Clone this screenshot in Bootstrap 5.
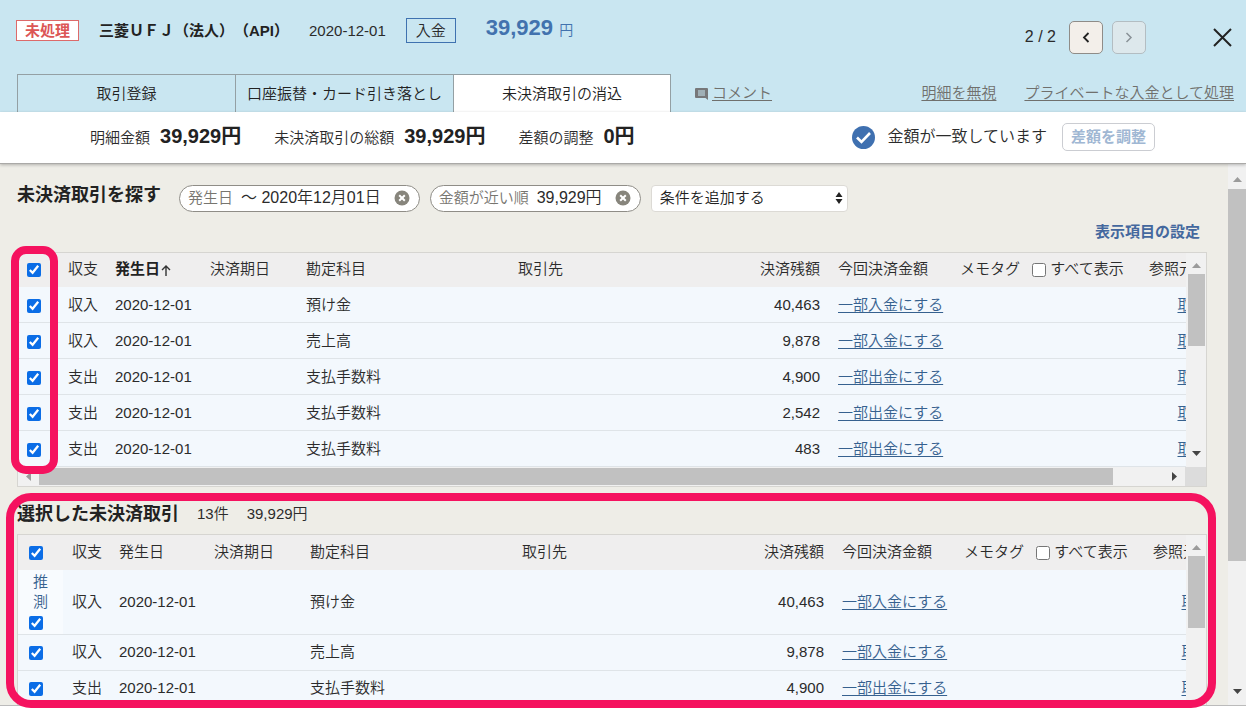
<!DOCTYPE html>
<html lang="ja">
<head>
<meta charset="utf-8">
<meta name="viewport" content="width=device-width, initial-scale=1">
<title>未決済取引の消込</title>
<link href="https://cdn.jsdelivr.net/npm/bootstrap@5.3.0/dist/css/bootstrap.min.css" rel="stylesheet">
<style>
  body { font-family: "Liberation Sans", "Noto Sans CJK JP", sans-serif; font-size: 15px; line-height: 20px; font-weight: 350; color: #2b2b2b; background: #fff; padding-bottom: 6px; text-spacing-trim: space-all; }
  a { color: #36618f; text-decoration: underline; text-underline-offset: 2px; }
  b, h2, strong { color: #222; font-weight: 700; }
  button { font-weight: inherit; }
  input[type=checkbox] { width: 14px; height: 14px; margin: 0; accent-color: #0b6de6; vertical-align: middle; }

  .app-head { background: #c9e6f1; }
  .head-row { height: 74px; padding: 0 14px 0 16px; }
  .head-info { padding-bottom: 13px; gap: 20px; }
  .state-tag { border: 1px solid #dd6a6a; background: #fff; color: #dc5656; font-weight: 700; line-height: 19px; padding: 0 8px; }
  .kind-tag { border: 1px solid #3f72b0; line-height: 23px; padding: 0 9px; }
  .total { color: #4272ae; font-size: 22px; font-weight: 700; padding: 0 0 4px 10px; }
  .total small { font-size: 14px; font-weight: 350; }
  .pager { gap: 9px; font-size: 16px; }
  .pager button { width: 34px; height: 33px; border: 1px solid #8f8c88; border-radius: 5px; background: #f3efea; }
  .pager button:disabled { background: #dde8ec; border-color: #b3bdc2; color: #8a9297; }
  .pager .close-btn { margin-left: 58px; color: #222; }

  .tabs { padding: 0 12px 0 17px; }
  .tab-btn { width: 218px; height: 38px; border: 1px solid #94a0a4; border-width: 1px 0 0 1px; background: transparent; color: #222; padding: 0; }
  .tab-btn.current { background: #fff; border-right-width: 1px; }
  .tabs a { color: #70706d; }
  .tab-links { gap: 28px; }

  .summary { background: #fff; height: 52px; padding: 0 91px 0 90px; border-bottom: 1px solid #aaa9a7; box-shadow: 0 1px 3px rgba(0,0,0,.25); }
  .sums { gap: 33px; }
  .summary b { font-size: 20px; margin-left: 10px; }
  .match { font-size: 16px; gap: 12px; }
  .adjust-btn { font-size: 15px; font-weight: 700; color: #a0b7d3; background: #fff; border: 1px solid #cbcdd2; border-radius: 5px; height: 28px; padding: 0 8px; margin-left: 3px; }

  .work { background: #eeede7; border-bottom: 1px solid #bbb; min-height: 0; }
  .work-body { padding: 21px 21px 0 17px; min-width: 0; min-height: 0; }
  h2 { font-size: 18px; line-height: 20px; margin: 0; }
  .filters { gap: 10px; }
  .filters h2 { margin-right: 8px; padding-bottom: 6px; }
  .pill { height: 27px; background: #fff; border: 1px solid #8f8d87; border-radius: 14px; padding: 0 9px 0 8px; gap: 8px; font-size: 16px; }
  .pill span { color: #77756f; font-size: 15px; }
  .pill button { border: 0; background: none; padding: 0; margin-left: 5px; line-height: 0; }
  .add-cond { position: relative; width: 197px; }
  .add-cond select { appearance: none; width: 100%; height: 27px; border: 1px solid #dcdad5; border-radius: 4px; background: #fff; padding: 0 8px; font-size: 15px; font-weight: 350; color: #222; }
  .add-cond svg { position: absolute; right: 5px; top: 7px; pointer-events: none; }
  .columns-link { height: 40px; padding-right: 7px; }
  .columns-link a { color: #44689e; font-weight: 700; text-decoration: none; }

  .frame { border: 1px solid #d6d5d1; background: #f1f1f1; }
  .grid-view { overflow: hidden; min-width: 0; }
  .deals { table-layout: fixed; width: calc(100% + 59px); margin: 0; color: inherit; white-space: nowrap; }
  .deals.picked { width: calc(100% + 63px); }
  .deals > :not(caption) > * > * { height: 36px; padding: 0 9px; border-bottom: 1px solid #dfe4e8; background: #f3f8fd; vertical-align: middle; font-weight: 350; color: inherit; }
  .deals > thead > tr > th { height: 34px; background: #efeeee; border-bottom-color: #efeeee; }
  .deals > thead > tr > th.sorted { font-weight: 700; color: #222; }
  .deals.picked > :not(caption) > * > :first-child { padding-left: 11px; }
  .deals > tbody > tr > .guess { background: #f8fbfe; height: 65px; white-space: normal; }
  .guess a { display: block; width: 15px; margin-left: 4px; text-decoration: none; }
  .c-in { width: 47px; } .c-day { width: 95px; } .c-due { width: 96px; } .c-acct { width: 212px; }
  .c-rest { width: 100px; } .c-now { width: 122px; } .c-memo { width: 189px; } .c-src { width: 105px; }
  .c-check { width: 41px; } .picked .c-check { width: 45px; }

  .bar-v { width: 20px; padding: 6px 1px 11px 2px; background: #f1f1f1; }
  .bar-v svg, .page-bar svg { flex: none; align-self: center; }
  .thumb { background: #c1c1c1; }
  .bar-v .thumb { height: 72px; margin-top: 6px; }
  .bar-h { height: 19px; }
  .bar-h .thumb { height: 17px; flex: 0 0 92%; }
  .corner { width: 21px; background: #dcdcdc; }
  .page-bar { width: 18px; background: #f1f1f1; padding: 13px 0 11px; }
  .page-bar .thumb { flex: 0 0 72%; margin-top: 7px; }

  .mark-box { position: absolute; border: 8px solid #f5125f; pointer-events: none; }
  .mark-checks { left: -7px; top: -7px; bottom: 12px; width: 47px; border-radius: 15px; }
  .mark-picked { left: -11px; right: -9px; top: 6px; bottom: -3px; border-radius: 25px; }
  .picked-head { padding: 17px 0 10px; gap: 18px; }
  .min-h-0 { min-height: 0; }
</style>
<script src="https://cdn.jsdelivr.net/npm/bootstrap@5.3.0/dist/js/bootstrap.bundle.min.js"></script>
</head>
<body class="vh-100 d-flex flex-column overflow-hidden">
<svg class="d-none">
  <symbol id="clear" viewBox="0 0 16 16"><circle cx="8" cy="8" r="7.5" fill="#87857c"/><path d="M5.2 5.2l5.6 5.6M10.8 5.2l-5.6 5.6" stroke="#fff" stroke-width="2"/></symbol>
  <symbol id="up" viewBox="0 0 9 5"><path d="M0 5L4.500 0 9 5z" fill="#9b9b9b"/></symbol>
  <symbol id="down" viewBox="0 0 9 5"><path d="M0 0L4.500 5 9 0z" fill="#444"/></symbol>
</svg>

<header class="app-head">
  <div class="head-row d-flex align-items-center justify-content-between">
    <div class="head-info d-flex align-items-center text-nowrap">
      <span class="state-tag">未処理</span>
      <strong>三菱ＵＦＪ（法人）（API）</strong>
      <span>2020-12-01</span>
      <span class="kind-tag">入金</span>
      <span class="total">39,929 <small>円</small></span>
    </div>
    <div class="pager d-flex align-items-center">
      <span class="me-1">2 / 2</span>
      <button type="button" aria-label="前へ"><svg width="8" height="11" viewBox="0 0 8 11"><path d="M6.500 1L2 5.500l4.500 4.500" fill="none" stroke="#222" stroke-width="1.800"/></svg></button>
      <button type="button" aria-label="次へ" disabled><svg width="8" height="11" viewBox="0 0 8 11"><path d="M1.500 1L6 5.500 1.500 10" fill="none" stroke="currentColor" stroke-width="1.500"/></svg></button>
      <button type="button" class="close-btn p-0 w-auto border-0 bg-transparent" aria-label="閉じる"><svg width="19" height="19" viewBox="0 0 19 19"><path d="M1 1l17 17M18 1L1 18" stroke="#222" stroke-width="2"/></svg></button>
    </div>
  </div>
  <nav class="tabs d-flex align-items-center text-nowrap">
    <button type="button" class="tab-btn">取引登録</button>
    <button type="button" class="tab-btn">口座振替・カード引き落とし</button>
    <button type="button" class="tab-btn current">未決済取引の消込</button>
    <a href="#" class="ms-4"><svg width="13" height="12" viewBox="0 0 13 12" class="me-1"><path d="M1 0h11a1 1 0 0 1 1 1v11l-2.500-2H1a1 1 0 0 1-1-1V1a1 1 0 0 1 1-1z" fill="#77787a"/><path d="M3 3h7M3 5h7M3 7h7" stroke="#c9e6f1"/></svg>コメント</a>
    <div class="tab-links d-flex ms-auto"><a href="#">明細を無視</a><a href="#">プライベートな入金として処理</a></div>
  </nav>
</header>

<section class="summary d-flex align-items-center justify-content-between position-relative text-nowrap">
  <div class="sums d-flex align-items-baseline">
    <span>明細金額<b>39,929円</b></span>
    <span>未決済取引の総額<b>39,929円</b></span>
    <span>差額の調整<b>0円</b></span>
  </div>
  <div class="match d-flex align-items-center">
    <svg width="23" height="23" viewBox="0 0 23 23"><circle cx="11.500" cy="11.500" r="11.500" fill="#3f70b0"/><path d="M5 11.500l4.500 4.500 8.500-9" fill="none" stroke="#fff" stroke-width="2.600"/></svg>
    <span>金額が一致しています</span>
    <button type="button" class="adjust-btn">差額を調整</button>
  </div>
</section>

<main class="work d-flex flex-fill">
  <div class="work-body d-flex flex-column flex-fill">
    <div class="filters d-flex align-items-center text-nowrap">
      <h2>未決済取引を探す</h2>
      <div class="pill d-flex align-items-center"><span>発生日</span>～ 2020年12月01日<button type="button" aria-label="発生日を解除"><svg width="16" height="16"><use href="#clear"/></svg></button></div>
      <div class="pill d-flex align-items-center"><span>金額が近い順</span>39,929円<button type="button" aria-label="金額を解除"><svg width="16" height="16"><use href="#clear"/></svg></button></div>
      <div class="add-cond">
        <select aria-label="条件を追加する"><option>条件を追加する</option></select>
        <svg width="8" height="12" viewBox="0 0 8 12"><path d="M4 0l3.500 5h-7zM4 12L.5 7h7z" fill="#222"/></svg>
      </div>
    </div>
    <div class="columns-link d-flex align-items-center justify-content-end"><a href="#">表示項目の設定</a></div>

    <div class="frame position-relative">
      <div class="d-flex">
        <div class="grid-view flex-fill">
          <table class="table deals">
            <colgroup><col class="c-check"><col class="c-in"><col class="c-day"><col class="c-due"><col class="c-acct"><col><col class="c-rest"><col class="c-now"><col class="c-memo"><col class="c-src"></colgroup>
            <thead><tr>
              <th><input type="checkbox" checked aria-label="すべて選択"></th><th>収支</th>
              <th class="sorted">発生日<svg width="12" height="12" viewBox="0 0 12 12"><path d="M6 12V2M2 6l4-4 4 4" fill="none" stroke="#333" stroke-width="1.400"/></svg></th>
              <th>決済期日</th><th>勘定科目</th><th>取引先</th><th class="text-end">決済残額</th><th>今回決済金額</th>
              <th>メモタグ <label class="ms-2"><input type="checkbox"> すべて表示</label></th><th>参照元</th>
            </tr></thead>
            <tbody>
              <tr><td><input type="checkbox" checked aria-label="選択"></td><td>収入</td><td>2020-12-01</td><td></td><td>預け金</td><td></td><td class="text-end">40,463</td><td><a href="#">一部入金にする</a></td><td></td><td class="text-center"><a href="#">取引</a></td></tr>
              <tr><td><input type="checkbox" checked aria-label="選択"></td><td>収入</td><td>2020-12-01</td><td></td><td>売上高</td><td></td><td class="text-end">9,878</td><td><a href="#">一部入金にする</a></td><td></td><td class="text-center"><a href="#">取引</a></td></tr>
              <tr><td><input type="checkbox" checked aria-label="選択"></td><td>支出</td><td>2020-12-01</td><td></td><td>支払手数料</td><td></td><td class="text-end">4,900</td><td><a href="#">一部出金にする</a></td><td></td><td class="text-center"><a href="#">取引</a></td></tr>
              <tr><td><input type="checkbox" checked aria-label="選択"></td><td>支出</td><td>2020-12-01</td><td></td><td>支払手数料</td><td></td><td class="text-end">2,542</td><td><a href="#">一部出金にする</a></td><td></td><td class="text-center"><a href="#">取引</a></td></tr>
              <tr><td><input type="checkbox" checked aria-label="選択"></td><td>支出</td><td>2020-12-01</td><td></td><td>支払手数料</td><td></td><td class="text-end">483</td><td><a href="#">一部出金にする</a></td><td></td><td class="text-center"><a href="#">取引</a></td></tr>
            </tbody>
          </table>
        </div>
        <div class="bar-v d-flex flex-column flex-shrink-0"><svg width="9" height="5" class="mt-1"><use href="#up"/></svg><div class="thumb"></div><svg width="9" height="5" class="mt-auto"><use href="#down"/></svg></div>
      </div>
      <div class="bar-h d-flex">
        <div class="d-flex flex-fill align-items-center">
          <svg width="21" height="9" viewBox="0 0 21 9"><path d="M13 0v9L8 4.500z" fill="#9b9b9b"/></svg>
          <div class="thumb"></div>
          <svg class="ms-auto me-2" width="5" height="9" viewBox="0 0 5 9"><path d="M0 0v9l5-4.500z" fill="#444"/></svg>
        </div>
        <div class="corner"></div>
      </div>
      <div class="mark-box mark-checks"></div>
    </div>

    <section class="position-relative d-flex flex-column flex-fill min-h-0">
      <div class="picked-head d-flex align-items-center"><h2>選択した未決済取引</h2><span>13件</span><span>39,929円</span></div>
      <div class="frame d-flex flex-fill min-h-0 border-bottom-0 overflow-hidden">
        <div class="grid-view flex-fill">
          <table class="table deals picked">
            <colgroup><col class="c-check"><col class="c-in"><col class="c-day"><col class="c-due"><col class="c-acct"><col><col class="c-rest"><col class="c-now"><col class="c-memo"><col class="c-src"></colgroup>
            <thead><tr>
              <th><input type="checkbox" checked aria-label="すべて選択"></th><th>収支</th><th>発生日</th><th>決済期日</th><th>勘定科目</th><th>取引先</th><th class="text-end">決済残額</th><th>今回決済金額</th>
              <th>メモタグ <label class="ms-2"><input type="checkbox"> すべて表示</label></th><th>参照元</th>
            </tr></thead>
            <tbody>
              <tr><td class="guess"><a href="#">推測</a><input type="checkbox" checked aria-label="選択"></td><td>収入</td><td>2020-12-01</td><td></td><td>預け金</td><td></td><td class="text-end">40,463</td><td><a href="#">一部入金にする</a></td><td></td><td class="text-center"><a href="#">取引</a></td></tr>
              <tr><td><input type="checkbox" checked aria-label="選択"></td><td>収入</td><td>2020-12-01</td><td></td><td>売上高</td><td></td><td class="text-end">9,878</td><td><a href="#">一部入金にする</a></td><td></td><td class="text-center"><a href="#">取引</a></td></tr>
              <tr><td><input type="checkbox" checked aria-label="選択"></td><td>支出</td><td>2020-12-01</td><td></td><td>支払手数料</td><td></td><td class="text-end">4,900</td><td><a href="#">一部出金にする</a></td><td></td><td class="text-center"><a href="#">取引</a></td></tr>
            </tbody>
          </table>
        </div>
        <div class="bar-v d-flex flex-column flex-shrink-0"><svg width="9" height="5" class="mt-1"><use href="#up"/></svg><div class="thumb"></div></div>
      </div>
      <div class="mark-box mark-picked"></div>
    </section>
  </div>
  <div class="page-bar d-flex flex-column flex-shrink-0"><svg width="9" height="5"><use href="#up"/></svg><div class="thumb"></div><svg width="9" height="5" class="mt-auto"><use href="#down"/></svg></div>
</main>
</body>
</html>
